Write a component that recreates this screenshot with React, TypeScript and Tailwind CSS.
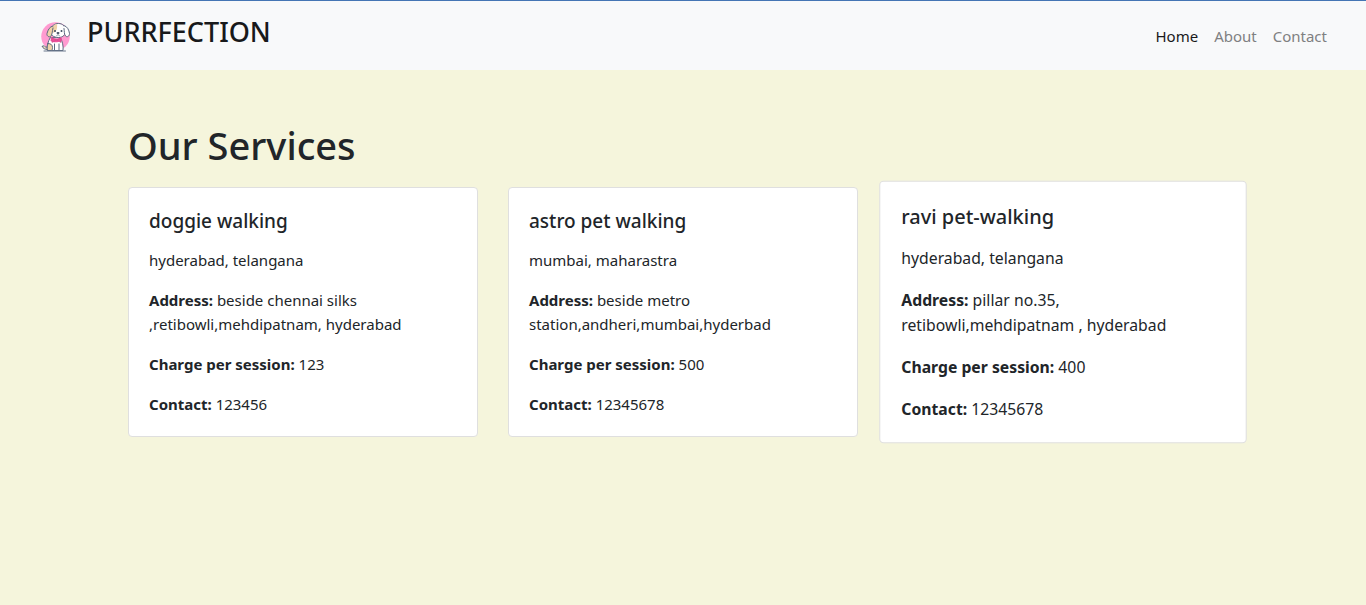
type Service = {
  name: string;
  area: string;
  address: string;
  charge: string;
  contact: string;
  raised?: boolean;
};

const services: Service[] = [
  {
    name: 'doggie walking',
    area: 'hyderabad, telangana',
    address: 'beside chennai silks ,retibowli,mehdipatnam, hyderabad',
    charge: '123',
    contact: '123456',
  },
  {
    name: 'astro pet walking',
    area: 'mumbai, maharastra',
    address: 'beside metro station,andheri,mumbai,hyderbad',
    charge: '500',
    contact: '12345678',
  },
  {
    name: 'ravi pet-walking',
    area: 'hyderabad, telangana',
    address: 'pillar no.35, retibowli,mehdipatnam , hyderabad',
    charge: '400',
    contact: '12345678',
    raised: true,
  },
];

function PuppyLogo() {
  return (
    <svg viewBox="0 0 60 60" className="size-[30px]" aria-hidden="true">
      <circle cx="29" cy="29" r="28.5" fill="#ff9bd0" />
      <g stroke="#5c6a80" strokeWidth="2" strokeLinecap="round" strokeLinejoin="round">
        <path d="M13 55c-5 0-9-2-11-7 2 1 3 0 4-1 2 3 4 4 8 3" fill="#f3dcbd" />
        <path d="M18 32c-4 7-7 17-5 25h31c1-9-1-18-5-25z" fill="#fff" />
        <path d="M14 43c6 0 9 3 9 8 0 4-1 6-3 6h-7c-1-5-1-9 1-14z" fill="#f0d2a8" />
        <path d="M27 44v13M36 44v13" fill="none" />
        <path d="M19 17c1-9 8-14 16-14s13 5 14 13c1 9-5 15-14 15-10 0-17-5-16-14z" fill="#fff" />
        <path d="M20 16c1-7 5-11 12-12 1 8-1 15-6 17-4 1-6-1-6-5z" fill="#f0d2a8" stroke="none" />
        <path d="M24 8c-7 1-10 8-12 15-1 5 4 8 7 6 4-3 3-10 5-17" fill="#f0d2a8" />
        <path d="M46 7c7 2 10 9 11 16 0 6-5 8-8 5-3-4-2-9-3-15" fill="#fff" />
      </g>
      <path d="M34 24c0 3-2 4-4 3M34 24c0 3 2 4 4 3" fill="none" stroke="#5c6a80" />
      <ellipse cx="34" cy="22" rx="3" ry="2" fill="#3c4b60" />
      <circle cx="28" cy="18" r="2" fill="#3c4b60" />
      <circle cx="41" cy="18" r="2" fill="#3c4b60" />
      <path d="M20 30c7 4 14 4 20 0l2 7c-7 4-16 5-23 1z" fill="#f0569f" />
      <path d="m31 36-9-4v9zM31 36l9-4v9z" fill="#ee4f9a" stroke="#c9488a" strokeWidth="1" />
      <path d="M6 58h43" stroke="#6b788c" strokeWidth="2" strokeLinecap="round" />
    </svg>
  );
}

function ServiceCard({ service }: { service: Service }) {
  return (
    <article
      className={`rounded border border-[#dfdfdf] bg-white p-5 text-[15px] leading-6 transition-transform hover:scale-105 ${
        service.raised ? 'scale-105' : ''
      }`}
    >
      <h2 className="mb-[14px] text-[19px] leading-[26px] font-medium">{service.name}</h2>
      <div className="flex flex-col gap-4">
        <p>{service.area}</p>
        <p>
          <strong>Address:</strong> {service.address}
        </p>
        <p>
          <strong>Charge per session:</strong> {service.charge}
        </p>
        <p>
          <strong>Contact:</strong> {service.contact}
        </p>
      </div>
    </article>
  );
}

export default function App() {
  return (
    <div className="min-h-screen bg-[#f5f5dc] font-['Noto_Sans',sans-serif] text-[#212529]">
      <header className="flex items-center justify-between border-t border-[#4475b4] bg-[#f8f9fa] py-3 pr-[39px] pl-[41px]">
        <a href="#home" className="flex items-start gap-4 pb-[6px] text-[#18191b]">
          <span className="pt-[9px]">
            <PuppyLogo />
          </span>
          <span className="text-[27px] leading-[38px] font-medium">PURRFECTION</span>
        </a>
        <nav aria-label="Main" className="flex gap-4 text-[15px] leading-6">
          <a href="#home" aria-current="page" className="text-[#18191b]">
            Home
          </a>
          <a href="#about" className="text-[#7f8081]">
            About
          </a>
          <a href="#contact" className="text-[#7f8081]">
            Contact
          </a>
        </nav>
      </header>
      <main className="mx-auto max-w-[1140px] px-[15px] pt-[51px]">
        <h1 className="mb-[18px] text-[38px] leading-[48px] font-medium">Our Services</h1>
        <div className="grid items-start gap-[30px] md:grid-cols-3">
          {services.map((service) => (
            <ServiceCard key={service.name} service={service} />
          ))}
        </div>
      </main>
    </div>
  );
}
